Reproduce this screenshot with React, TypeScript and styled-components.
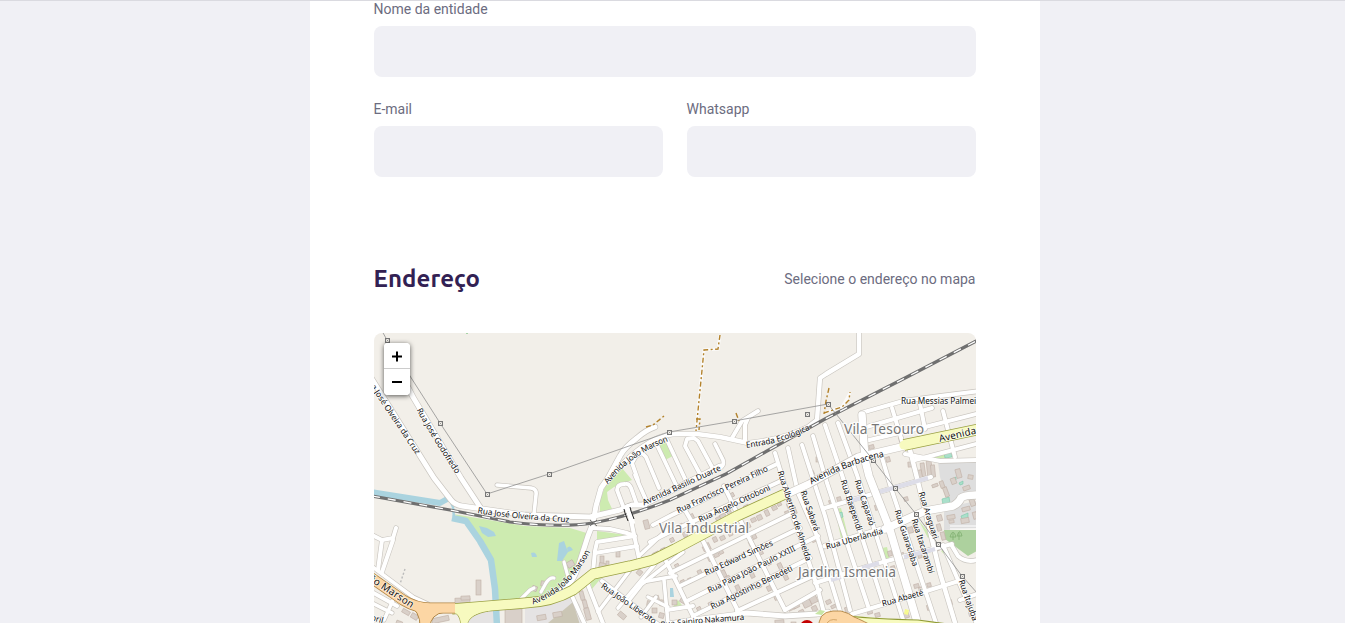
import React from "react";
import styled, { createGlobalStyle } from "styled-components";

const GlobalStyle = createGlobalStyle`
  * { box-sizing: border-box; margin: 0; padding: 0; }
  body {
    background: #f0f0f5;
    color: #6c6c80;
    font: 400 14px Roboto, sans-serif;
    overflow: hidden;
  }
`;

const Page = styled.main`
  height: 623px;
  overflow: hidden;
  border-top: 1px solid #dadae0;
  padding-left: 4px;
  display: flex;
  justify-content: center;
`;

const Form = styled.form`
  width: 730px;
  padding: 0 64px;
  background: #fff;
  display: flex;
  flex-direction: column;
`;

const FieldRow = styled.div`
  display: flex;
  gap: 24px;
  margin-bottom: 24px;
`;

const Field = styled.div`
  flex: 1;
  display: flex;
  flex-direction: column;
`;

const Label = styled.label`
  height: 16px;
  line-height: 16px;
  margin-bottom: 9px;
`;

const Input = styled.input`
  width: 100%;
  height: 51px;
  border: 0;
  border-radius: 8px;
  background: #f0f0f5;
  padding: 16px 24px;
  font-size: 16px;
  color: #6c6c80;
`;

const Legend = styled.div`
  display: flex;
  justify-content: space-between;
  align-items: center;
  height: 32px;
  margin: 62px 0 38px;
`;

const Title = styled.h2`
  font: 700 24px/32px Ubuntu, "Noto Sans", sans-serif;
  letter-spacing: 0.1px;
  color: #322153;
`;

const MapFrame = styled.div`
  position: relative;
  width: 602px;
  height: 350px;
  flex-shrink: 0;
  border-radius: 8px;
  overflow: hidden;
  background: #f2efe9;
`;

const MapSvg = styled.svg`
  display: block;
  font-family: "Noto Sans", sans-serif;
`;

const ZoomControl = styled.div`
  position: absolute;
  left: 10px;
  top: 10px;
  width: 26px;
  border-radius: 4px;
  box-shadow: 0 1px 5px rgba(0, 0, 0, 0.65);
  overflow: hidden;
  background: #fff;
`;

const ZoomButton = styled.button`
  display: flex;
  align-items: center;
  justify-content: center;
  width: 26px;
  height: 26px;
  border: 0;
  background: #fff;
  &:first-child { border-bottom: 1px solid #ccc; }
`;

type Road = [d: string, width?: number];

const streets: Road[] = [
  // north-west
  ["M370 376L434 478L451 500Q455 505 462 506L525 515L590 517L620 510L632 505L645 505"],
  ["M404 380L413 397L461 478L480 507"],
  ["M497 485L531 488Q537 489 536 495L534 514", 3.6],
  ["M593 523L596 506L601 488L608 478L620 456Q624 448 637 438Q646 430 655 427"],
  ["M607 482Q630 452 654 440Q664 434 680 434H697L720 437L748 443Q785 439 808 427L817 420L820 378L826 374L859 354V330", 4.4],
  ["M732 438L742 421L750 416L758 411", 4],
  ["M745 441L745 425L748 418", 4],
  // north of the railway, Vila Industrial
  ["M638 480L632 463L636 456L642 453L646 457L659 488", 3.8],
  ["M646 500L635 475", 3.8], ["M657 445L677 487", 3.8],
  ["M667 440L686 481", 3.8],
  ["M700 474L685 446L687 439L694 438L698 441L712 467", 3.8],
  ["M715 444L723 460Q725 466 718 469", 3.8], ["M643 505L720 466"],
  ["M623 506L617 490Q617 484 625 484Q629 483 631 488L637 505", 3.8],
  ["M628 506L640 563", 4],
  ["M593 528L610 529L627 533L635 536L597 542L595 551L593 572", 4],
  ["M595 553L637 546", 4],
  ["M593 523L588 536L580 561Q576 575 570 583L553 597"],
  ["M520 600L530 590L534 588", 3.2], ["M541 592L546 583Q550 577 554 578", 3.2], ["M568 577L564 562", 3.2],
  // south of the avenue
  ["M588 585L604 626", 4], ["M602 581L660 626", 4], ["M572 596L585 625", 4],
  ["M630 570L598 612", 3.6], ["M655 564L618 608", 3.6], ["M683 552L642 584L627 603", 3.6],
  ["M642 582L676 576", 3.6], ["M665 559L697 624", 4], ["M664 580L668 623", 3.6],
  ["M648 597L668 607", 3.4], ["M641 617L656 597", 3.4], ["M667 610L693 606", 4],
  // Vila Industrial grid
  ["M653 525L670 516L777 464", 4], ["M650 542L670 532L783 480", 4],
  ["M640 555L672 525", 3.5],
  ["M670 573L793 513", 4], ["M680 586L800 528", 4], ["M687 601L818 536", 4],
  ["M693 616L810 558", 4], ["M737 611L815 575", 4], ["M785 610L820 590", 4],
  ["M650 627L693 620L747 613L785 616L817 614L828 612", 5],
  ["M685 510L703 541L738 611", 4], ["M724 486L748 536L785 610", 4],
  ["M775 453L785 486L793 516L817 586L824 613", 4],
  ["M788 448L798 493L817 536L840 611", 4],
  ["M802 445L825 516L850 610", 4], ["M813 436L827 483L868 606", 4],
  ["M825 425L842 475L883 603", 4], ["M838 423L857 475L905 626", 4],
  ["M880 451L891 488L925 590L937 626", 4],
  ["M892 408L902 441", 4], ["M910 450L925 510L940 573L956 626", 4.5],
  ["M943 545L976 622", 4],
  ["M825 508L862 497L931 477", 4],
  ["M825 546L885 528"], ["M815 583L872 565L898 558L952 544", 4],
  ["M852 614L885 604L962 580", 4],
  ["M952 546L958 556Q966 563 977 560", 4], ["M960 600L977 594", 4],
  // Vila Tesouro
  ["M861 427V413L903 401L940 396L980 391", 4], ["M863 428L932 408", 4],
  ["M865 441L925 427L980 413", 4],
  ["M915 460L980 443", 4], ["M905 454L940 461L980 460", 4],
  ["M920 404L925 429", 4], ["M943 411L955 457", 4],
  // left edge
  ["M370 534L382 540L393 538L396 528", 4], ["M382 540L378 570", 4],
  ["M393 540L382 572", 4], ["M370 565L413 597L428 604", 3.5],
  ["M370 591L397 606", 4], ["M370 602L392 613", 3.5], ["M394 598L384 620", 3.5],
];

const mainRoads: Road[] = [
  ["M785 495L809 484L858 457L905 446", 7],
  ["M862 415L865 460L869 476L890 530L919 628", 7.5],
  ["M885 529L925 511L953 506Q959 503 961 498Q964 495 980 495", 7.5],
];

const rail =
  "M372 496L450 510L510 522Q560 528 593 523Q630 516 670 500L726 474L767 451L825 419L905 378L980 339";

const avenues: string[] = [
  "M452 609Q475 607 525 603Q552 602 573 590L593 574L630 566L653 560L675 549L737 516L785 494",
  "M904 445L980 429",
];

// x, y, width, height, rotation in degrees
const buildings: number[][] = [
  [476,580,5,15,0],[455,598,15,5,-2],[461,596,9,4,-2],[505,609,17,16,0],[432,617,17,5,-12],[402,610,8,4,30],[411,614,7,5,30],
  [537,615,9,5,-10],[553,612,9,5,-10],[567,561,7,6,-30],[532,586,5,5,20],[541,581,4,5,10],[396,621,6,5,20],
  [644,520,5,9,-15],[616,551,4,6,0],[600,556,4,8,0],[599,563,6,7,10],[606,561,3,5,0],
  [580,591,4,9,-15],[583,600,4,8,-15],[585,608,5,12,-15],[637,570,5,5,40],[653,552,6,3,-25],[661,548,5,4,-25],[618,613,8,5,40],
  [647,601,5,5,10],[653,596,6,5,-15],[660,600,4,6,10],[652,608,5,5,0],[659,613,5,5,15],[672,600,5,5,0],[680,599,6,4,30],
  [670,538,4,4,-25],[678,524,5,4,-25],[683,532,4,5,-25],[691,527,4,4,-25],[690,514,4,6,-25],[701,533,4,5,-25],[712,526,4,5,-25],[716,517,5,4,-25],[720,514,6,5,-25],[727,509,4,6,-25],
  [706,543,4,7,-25],[713,537,4,5,-25],[720,536,5,4,-25],[728,530,4,6,-25],[744,505,5,4,-25],[738,498,4,5,-25],[730,493,4,4,-25],[746,522,4,6,-25],[751,518,5,4,-25],
  [757,515,5,5,-25],[765,510,4,6,-25],[772,506,5,4,-25],[777,501,4,5,-25],[787,503,5,5,-20],[785,511,4,4,-20],[792,506,4,8,-20],
  [752,533,4,6,-25],[753,545,4,9,-25],[757,551,6,4,-25],[749,541,4,5,-25],[714,553,5,4,-25],[719,549,4,5,-25],[703,546,4,5,-25],[722,570,4,8,-25],[725,576,5,4,-25],[698,570,4,6,-25],[688,578,4,5,-25],[681,580,4,5,-25],
  [675,564,4,4,-25],[708,556,4,5,-25],[750,571,4,7,-25],[756,583,5,5,-25],[767,586,4,5,-25],[774,594,4,6,-25],[767,561,4,4,-25],[778,563,4,6,-25],[784,575,4,5,-25],[736,585,4,7,-25],[709,602,4,6,-25],[697,607,4,4,-25],
  [788,606,7,4,-25],[793,603,6,5,-25],[803,600,8,7,-25],[810,596,7,7,-25],[799,610,5,4,-25],[812,606,5,5,-25],[775,620,9,5,-5],[791,622,5,4,0],
  [816,457,3,5,0],[810,471,4,4,-20],[812,538,4,4,-20],[826,600,5,4,-25],[831,605,5,3,-25],[845,607,6,5,-15],[867,608,5,6,-15],[875,613,5,4,-15],
  [829,500,5,4,-15],[837,497,4,4,-15],[875,505,4,5,-15],[872,490,4,5,-15],[869,445,5,4,-15],[899,437,4,5,-15],[886,457,4,5,-15],[862,436,4,3,-15],
  [908,462,4,5,-5],[921,463,4,14,-8],[927,461,5,17,-6],[931,465,4,12,-6],[918,470,4,9,-10],[944,487,4,10,-20],[940,481,4,7,-20],[932,484,6,3,-20],[951,478,5,6,-20],[963,486,7,4,-20],[956,469,5,9,-15],[968,475,5,4,10],
  [947,515,8,4,-10],[961,518,8,5,-10],[970,499,5,7,-20],[962,507,8,4,-15],[973,512,4,7,-15],[949,520,5,3,-10],
  [937,515,5,6,-15],[937,524,4,7,-15],[941,532,4,8,-15],[934,547,5,4,-15],[908,527,5,6,-15],[913,523,4,4,-15],[903,518,5,5,-15],[904,497,4,4,-15],
  [888,551,4,5,-15],[899,553,5,4,-15],[910,550,4,5,-15],[918,554,4,4,-15],[891,566,4,4,-15],[919,587,4,5,-15],[914,584,5,4,-15],[903,613,6,5,-15],[927,583,4,4,-15],[948,600,4,5,-15],[969,612,4,4,-15],[927,605,4,5,-15],
];

const masts: [number, number][] = [
  [387.5,340.5],[440.5,423.5],[487.5,494.5],[549.5,474.5],[669.5,432.5],[734.5,421.5],[807.5,414.5],
  [828.5,404.5],[873.5,460.5],[895.5,488.5],[916.5,514.5],[938.5,544.5],[962.5,576.5],
];

type StreetLabel = { text: string; d: string; length: number; size?: number };

const streetLabels: StreetLabel[] = [
  { text: "Rua José Olveira da Cruz", d: "M367 377L420 456", length: 92 },
  { text: "Rua José Godofredo", d: "M419 409Q430 430 459 474", length: 75 },
  { text: "Rua José Olveira da Cruz", d: "M478 510.5Q500 515 572 520", length: 92 },
  { text: "Avenida João Marson", d: "M606 483Q628 452 672 437", length: 77 },
  { text: "Avenida Basilio Duarte", d: "M643 503L722 467", length: 85 },
  { text: "Entrada Ecológica", d: "M746 445Q780 442 811 426", length: 66 },
  { text: "Rua Francisco Pereira Filho", d: "M677 511L770 467", length: 100 },
  { text: "Rua Ângelo Ottoboni", d: "M699 520L773 486", length: 78 },
  { text: "Rua Albertino de Almeida", d: "M780 471L810 565", length: 94 },
  { text: "Rua Sabará", d: "M803 491L818 534", length: 42 },
  { text: "Avenida Barbacena", d: "M810 482Q845 462 887 453", length: 79, size: 9 },
  { text: "Rua Edward Simões", d: "M705 573L776 541", length: 74 },
  { text: "Rua Papa João Paulo XXIII", d: "M708 591L799 546", length: 97 },
  { text: "Rua Agostinho Benedeti", d: "M711 607L796 566", length: 90 },
  { text: "Rua Sainiro Nakamura", d: "M661 625Q690 621 749 617", length: 84 },
  { text: "Rua João Liberato", d: "M602 585L658 624", length: 65 },
  { text: "Avenida João Marson", d: "M532 602Q568 590 589 548", length: 78 },
  { text: "João Marson", d: "M362 572L415 607", length: 61, size: 10 },
  { text: "Rua Messias Palmeira", d: "M901 401.5L990 401.5", length: 83 },
  { text: "Avenida Pres. Castelo", d: "M939 439L1040 416", length: 102, size: 9.8 },
  { text: "Rua Baependi", d: "M843 480L861 535", length: 53 },
  { text: "Rua Caparaó", d: "M857 480L874 531", length: 48 },
  { text: "Rua Araguari", d: "M921 492L937 543", length: 49 },
  { text: "Rua Itacarambi", d: "M914 519L933 578", length: 57 },
  { text: "Rua Guaraciaba", d: "M897 510L917 571", length: 59 },
  { text: "Rua Uberlândia", d: "M826 547L886 530", length: 59 },
  { text: "Rua Abaeté", d: "M882 604L928 591", length: 43 },
  { text: "Rua Itajubá", d: "M961 580L977 625", length: 43 },
  { text: "Abril", d: "M366 616L388 622", length: 18 },
];

const places: { text: string; x: number; y: number; length: number }[] = [
  { text: "Vila Industrial", x: 659, y: 532.5, length: 90 },
  { text: "Vila Tesouro", x: 844, y: 433.5, length: 80 },
  { text: "Jardim Ismenia", x: 798, y: 576.5, length: 98 },
];

const RoadLayer = ({ roads }: { roads: Road[] }) => (
  <g fill="none" strokeLinecap="round" strokeLinejoin="round">
    <g stroke="#c9c5bf">
      {roads.map(([d, w = 5], i) => <path key={i} d={d} strokeWidth={w + 1.3} />)}
    </g>
    <g stroke="#fff">
      {roads.map(([d, w = 5], i) => <path key={i} d={d} strokeWidth={w} />)}
    </g>
  </g>
);

const AddressMap = () => (
  <MapSvg width="602" height="350" viewBox="374 333 602 350">
    {/* land cover */}
    <g fill="#cdebb0">
      <path d="M453 514L525 526L570 528L590 534L583 558L570 583L552 598L525 602L499 603L493 563L480 540L467 521Z" />
      <path d="M622 468L632 480L614 487L607 492L608 500L613 511L600 513L600 500L606 484Z" />
      <path d="M658 443L667 441L673 456L665 460Z" />
      <path d="M597 531L627 535L597 541ZM590 580L602 577L592 589Z" />
      <path d="M835 509L841 508L848 536L841 538ZM882 548L887 547L890 560L885 562ZM919 521L931 535L928 538Z" />
      <path d="M917 460L950 452L952 457L930 460ZM673 607L678 600L684 608ZM941 551L946 548L944 554Z" />
    </g>
    <path d="M525 608L573 597L580 605L584 625H525ZM470 612L497 608L495 625H465Z" fill="#e5e3e3" />
    <path d="M548 623L573 602L580 625Z" fill="#cbc6b5" />
    <path d="M938 462H980V492L962 494L955 503L948 502L940 477ZM944 508L980 500V528L944 530Z" fill="#dedede" />
    <path d="M944 530H977V551L968 556L945 539Z" fill="#add19e" />
    <g fill="none" stroke="#7fae70" strokeWidth="0.8">
      <path d="M953 540V533M950 537Q953 527 956 537ZM959 540V532M957 536Q960 527 962 536Z" />
    </g>
    <g fill="#aae0cb" stroke="#7cc8aa" strokeWidth="0.6">
      <path d="M944 453L951 452L952 457L945 458ZM836 514L842 512L843 517L837 519ZM942 499L949 497L950 503L943 505ZM952 479L956 477L956 480L953 482ZM961 516L968 513L968 518L962 519ZM959 483L963 481L963 484L960 485Z" />
    </g>

    {/* water */}
    <g fill="none" stroke="#aad3df" strokeLinejoin="round">
      <path d="M370 492L440 503L449 498" strokeWidth="6" />
      <path d="M449 498L453 507L454 517" strokeWidth="2.5" />
      <path d="M452 518L466 521L480 541L491 560L495 589L497 626" strokeWidth="6.5" />
    </g>
    <path d="M479 526L487 528L494 532L496 536L488 537L482 533ZM559 543L564 541L568 552L562 561L557 561ZM567 548Q570 544 573 550L568 552ZM531 553Q536 551 537 557L532 557ZM670 588L673 588L674 597L670 597Z" fill="#aad3df" />

    <g fill="#d9d0c9" stroke="#c0b0a6" strokeWidth="0.6">
      {buildings.map(([x, y, w, h, r], i) => (
        <rect key={i} x={x} y={y} width={w} height={h} transform={`rotate(${r} ${x + w / 2} ${y + h / 2})`} />
      ))}
    </g>

    <RoadLayer roads={streets} />
    <g stroke="#dddde8" strokeWidth="4" fill="none">
      <path d="M846 502L864 497M879 492L928 478M831 580L841 577M862 568L879 563M904 557L935 549" />
    </g>
    <RoadLayer roads={mainRoads} />
    <path d="M950 529H978M950 526H978" stroke="#fff" strokeWidth="1.2" />

    {/* railway */}
    <g fill="none">
      <path d={rail} stroke="#707070" strokeWidth="3.2" />
      <path d={rail} stroke="#fff" strokeWidth="1.3" strokeDasharray="8 8" />
    </g>
    <path d="M590 520L597 526M590 526L597 520" stroke="#555" strokeWidth="0.8" />
    <path d="M627 507L633 524" stroke="#fff" strokeWidth="5" />
    <path d="M624 509L625 513L628 521M630 507L631 511L634 519" stroke="#222" strokeWidth="1" fill="none" />

    {/* avenues */}
    <g fill="none" strokeLinejoin="round">
      {avenues.map((d, i) => <path key={i} d={d} stroke="#9aa044" strokeWidth={i ? 11.5 : 11} />)}
      <path d="M454 612Q461 615 461 626M467 626Q467 615 488 611" stroke="#9aa044" strokeWidth="1.2" />
      <path d="M455 607H500L488 611Q468 614 467 626H461Q461 615 454 612Z" fill="#f7fabf" />
      {avenues.map((d, i) => <path key={i} d={d} stroke="#f7fabf" strokeWidth={i ? 10 : 9.5} />)}
      <circle cx="904" cy="445" r="4.6" fill="#f7fabf" />
      <path d="M370 577L403 600Q416 608 430 608H455" stroke="#b18645" strokeWidth="11" />
      <path d="M406 604Q421 610 420 628H430Q430 614 445 612" fill="#fcd6a4" stroke="#b18645" strokeWidth="1" />
      <path d="M370 577L403 600Q416 608 430 608H455" stroke="#fcd6a4" strokeWidth="9.5" />
      <path d="M848 630V615Q875 619 918 620L962 626V630Z" fill="#f7fabf" />
      <path d="M848 616Q875 619 918 620L962 626" stroke="#8f9a36" strokeWidth="1.2" />
      <path d="M815 614L820 610L825 611L822 615Z" fill="#c8e6a6" />
      <path d="M819 630Q817 612 833 611L841 611Q849 613 854 617Q862 620 880 630Z" fill="#fcd6a4" stroke="#b18645" strokeWidth="0.9" />
      <path d="M826 625Q829 618 837 620" stroke="#c99a5a" strokeWidth="0.8" />
    </g>
    <path d="M905 609L909 610L908 615L904 614Z" fill="#f7fa90" />

    {/* footpaths */}
    <g fill="none" stroke="#fff" strokeOpacity="0.7" strokeWidth="3">
      <path d="M720 335L718 349L704 350L696 431M824 413L842 407L850 393" />
    </g>
    <g fill="none" stroke="#b3822b" strokeWidth="1.4" strokeDasharray="5 2.5 2 2.5">
      <path d="M720 335L718 349L704 350L696 431" />
      <path d="M696 419H700L699 430M736 413L739 421M646 427L653 425L664 416M829 388L826 401L824 414M824 413L842 407L849 400L850 392" />
    </g>
    <path d="M405 569L400 584" stroke="#bbb" strokeWidth="1.4" strokeDasharray="2 2" />
    <circle cx="467" cy="333" r="1" fill="#8fca8f" />

    {/* power line */}
    <path d="M382 331L387 340L440 423L487 494L549 474L669 432L734 421L828 404L873 460L895 488L916 514L938 544L962 576L978 594" fill="none" stroke="#8b8b8b" strokeWidth="0.75" />
    <g fill="#f2efe9" stroke="#777" strokeWidth="1">
      {masts.map(([x, y], i) => (
        <g key={i}>
          <rect x={x - 2} y={y - 2} width="4" height="4" />
          <path d={`M${x - 1} ${y - 1}l2 2m0 -2l-2 2`} strokeWidth="0.5" />
        </g>
      ))}
    </g>

    {/* names */}
    <g fill="#111" stroke="#fff" strokeOpacity="0.7" strokeWidth="1.6" strokeLinejoin="round" style={{ paintOrder: "stroke" }}>
      {streetLabels.map(({ text, d, length, size = 8.3 }, i) => (
        <g key={i}>
          <path id={`street-${i}`} d={d} fill="none" stroke="none" />
          <text fontSize={size} dy={size * 0.32} textLength={length}>
            <textPath href={`#street-${i}`} textLength={length}>{text}</textPath>
          </text>
        </g>
      ))}
    </g>
    <g fill="#777" stroke="#fff" strokeOpacity="0.85" strokeWidth="2.6" strokeLinejoin="round" fontSize="13.8" style={{ paintOrder: "stroke" }}>
      {places.map((p) => (
        <text key={p.text} x={p.x} y={p.y} textLength={p.length}>{p.text}</text>
      ))}
    </g>
    <circle cx="807" cy="627" r="7" fill="#c40000" />
  </MapSvg>
);

export default function App() {
  return (
    <>
      <GlobalStyle />
      <Page>
        <Form>
          <FieldRow>
            <Field>
              <Label htmlFor="name">Nome da entidade</Label>
              <Input id="name" />
            </Field>
          </FieldRow>
          <FieldRow>
            <Field>
              <Label htmlFor="email">E-mail</Label>
              <Input id="email" />
            </Field>
            <Field>
              <Label htmlFor="whatsapp">Whatsapp</Label>
              <Input id="whatsapp" />
            </Field>
          </FieldRow>
          <Legend>
            <Title>Endereço</Title>
            <span>Selecione o endereço no mapa</span>
          </Legend>
          <MapFrame>
            <AddressMap />
            <ZoomControl>
              <ZoomButton type="button" aria-label="Zoom in">
                <svg width="12" height="12" viewBox="0 0 12 12"><path d="M1 6.5H11M6 1.5V11.5" stroke="#000" strokeWidth="2" /></svg>
              </ZoomButton>
              <ZoomButton type="button" aria-label="Zoom out">
                <svg width="12" height="12" viewBox="0 0 12 12"><path d="M1 6H11" stroke="#000" strokeWidth="2" /></svg>
              </ZoomButton>
            </ZoomControl>
          </MapFrame>
        </Form>
      </Page>
    </>
  );
}
